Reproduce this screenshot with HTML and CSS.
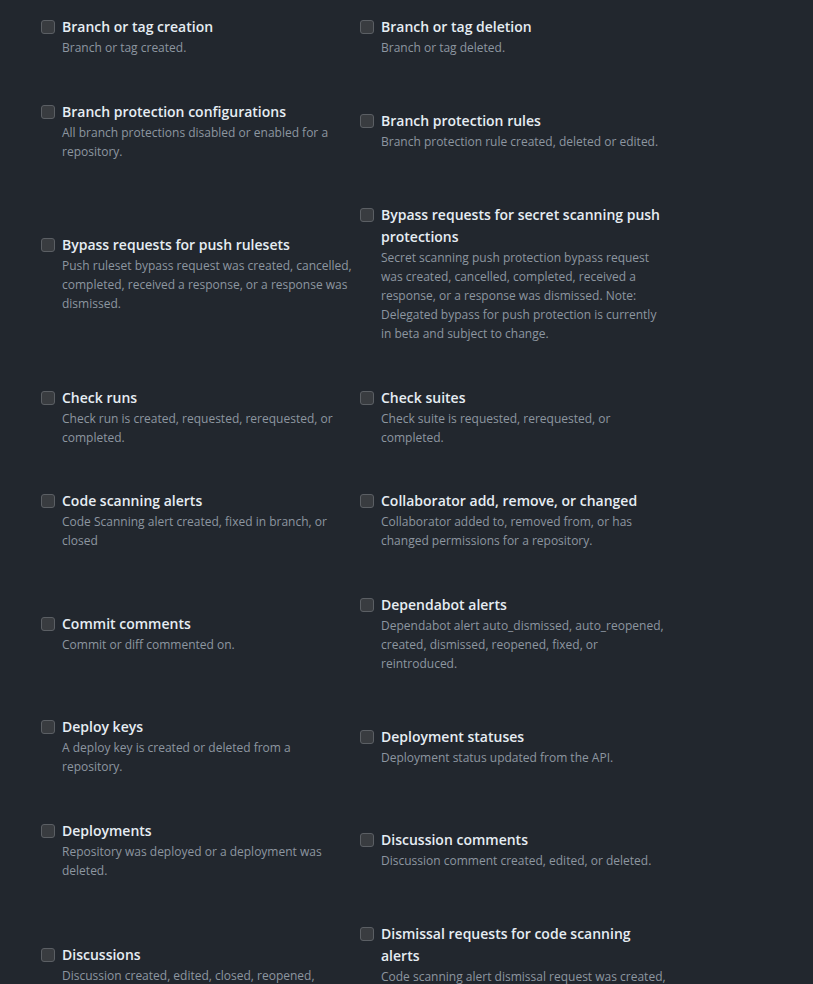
FILE: index.html
```html
<!DOCTYPE html>
<html lang="en">
<head>
  <meta charset="UTF-8">
  <title>Webhook events</title>
  <meta name="viewport" content="width=device-width, initial-scale=1.0"/>
  <link rel="stylesheet" href="styles.css">
</head>
<body>
  <div class="event-grid">
    <label class="event"><span class="box"></span><span class="text"><span class="name">Branch or tag creation</span><span class="desc">Branch or tag created.</span></span></label>
    <label class="event"><span class="box"></span><span class="text"><span class="name">Branch or tag deletion</span><span class="desc">Branch or tag deleted.</span></span></label>

    <label class="event"><span class="box"></span><span class="text"><span class="name">Branch protection configurations</span><span class="desc">All branch protections disabled or enabled for a repository.</span></span></label>
    <label class="event"><span class="box"></span><span class="text"><span class="name">Branch protection rules</span><span class="desc">Branch protection rule created, deleted or edited.</span></span></label>

    <label class="event"><span class="box"></span><span class="text"><span class="name">Bypass requests for push rulesets</span><span class="desc">Push ruleset bypass request was created, cancelled, completed, received a response, or a response was dismissed.</span></span></label>
    <label class="event"><span class="box"></span><span class="text"><span class="name">Bypass requests for secret scanning push protections</span><span class="desc">Secret scanning push protection bypass request was created, cancelled, completed, received a response, or a response was dismissed. Note: Delegated bypass for push protection is currently in beta and subject to change.</span></span></label>

    <label class="event"><span class="box"></span><span class="text"><span class="name">Check runs</span><span class="desc">Check run is created, requested, rerequested, or completed.</span></span></label>
    <label class="event"><span class="box"></span><span class="text"><span class="name">Check suites</span><span class="desc">Check suite is requested, rerequested, or completed.</span></span></label>

    <label class="event"><span class="box"></span><span class="text"><span class="name">Code scanning alerts</span><span class="desc">Code Scanning alert created, fixed in branch, or closed</span></span></label>
    <label class="event"><span class="box"></span><span class="text"><span class="name">Collaborator add, remove, or changed</span><span class="desc">Collaborator added to, removed from, or has changed permissions for a repository.</span></span></label>

    <label class="event"><span class="box"></span><span class="text"><span class="name">Commit comments</span><span class="desc">Commit or diff commented on.</span></span></label>
    <label class="event"><span class="box"></span><span class="text"><span class="name">Dependabot alerts</span><span class="desc">Dependabot alert auto_dismissed, auto_reopened, created, dismissed, reopened, fixed, or reintroduced.</span></span></label>

    <label class="event"><span class="box"></span><span class="text"><span class="name">Deploy keys</span><span class="desc">A deploy key is created or deleted from a repository.</span></span></label>
    <label class="event"><span class="box"></span><span class="text"><span class="name">Deployment statuses</span><span class="desc">Deployment status updated from the API.</span></span></label>

    <label class="event"><span class="box"></span><span class="text"><span class="name">Deployments</span><span class="desc">Repository was deployed or a deployment was deleted.</span></span></label>
    <label class="event"><span class="box"></span><span class="text"><span class="name">Discussion comments</span><span class="desc">Discussion comment created, edited, or deleted.</span></span></label>

    <label class="event"><span class="box"></span><span class="text"><span class="name">Discussions</span><span class="desc">Discussion created, edited, closed, reopened, pinned, unpinned, locked, unlocked, transferred, answered, unanswered, labeled, or unlabeled.</span></span></label>
    <label class="event"><span class="box"></span><span class="text"><span class="name">Dismissal requests for code scanning alerts</span><span class="desc">Code scanning alert dismissal request was created, cancelled, completed, received a response, or a response was dismissed. Note: this feature is currently in beta.</span></span></label>
  </div>
</body>
</html>
```

FILE: styles.css
```css
body { margin: 0; padding: 16px 0 0 41px; background: #22272e; font-family: "Open Sans", "Noto Sans", sans-serif; }
.event-grid { display: grid; grid-template-columns: 319px 319px; row-gap: 43.5px; align-items: center; }
.event { display: flex; align-items: flex-start; gap: 7px; cursor: pointer; }
.box { flex: none; width: 12px; height: 12px; margin-top: 4px; background: #393c40; border: 1px solid #5b5f64; border-radius: 3px; }
.text { display: flex; flex-direction: column; width: 287px; }
.event:nth-child(odd) .text { width: 291px; }
.name { font-size: 14px; font-weight: 600; line-height: 22px; color: #e6edf3; }
.desc { font-size: 12px; line-height: 19px; color: #8d96a0; }
```
